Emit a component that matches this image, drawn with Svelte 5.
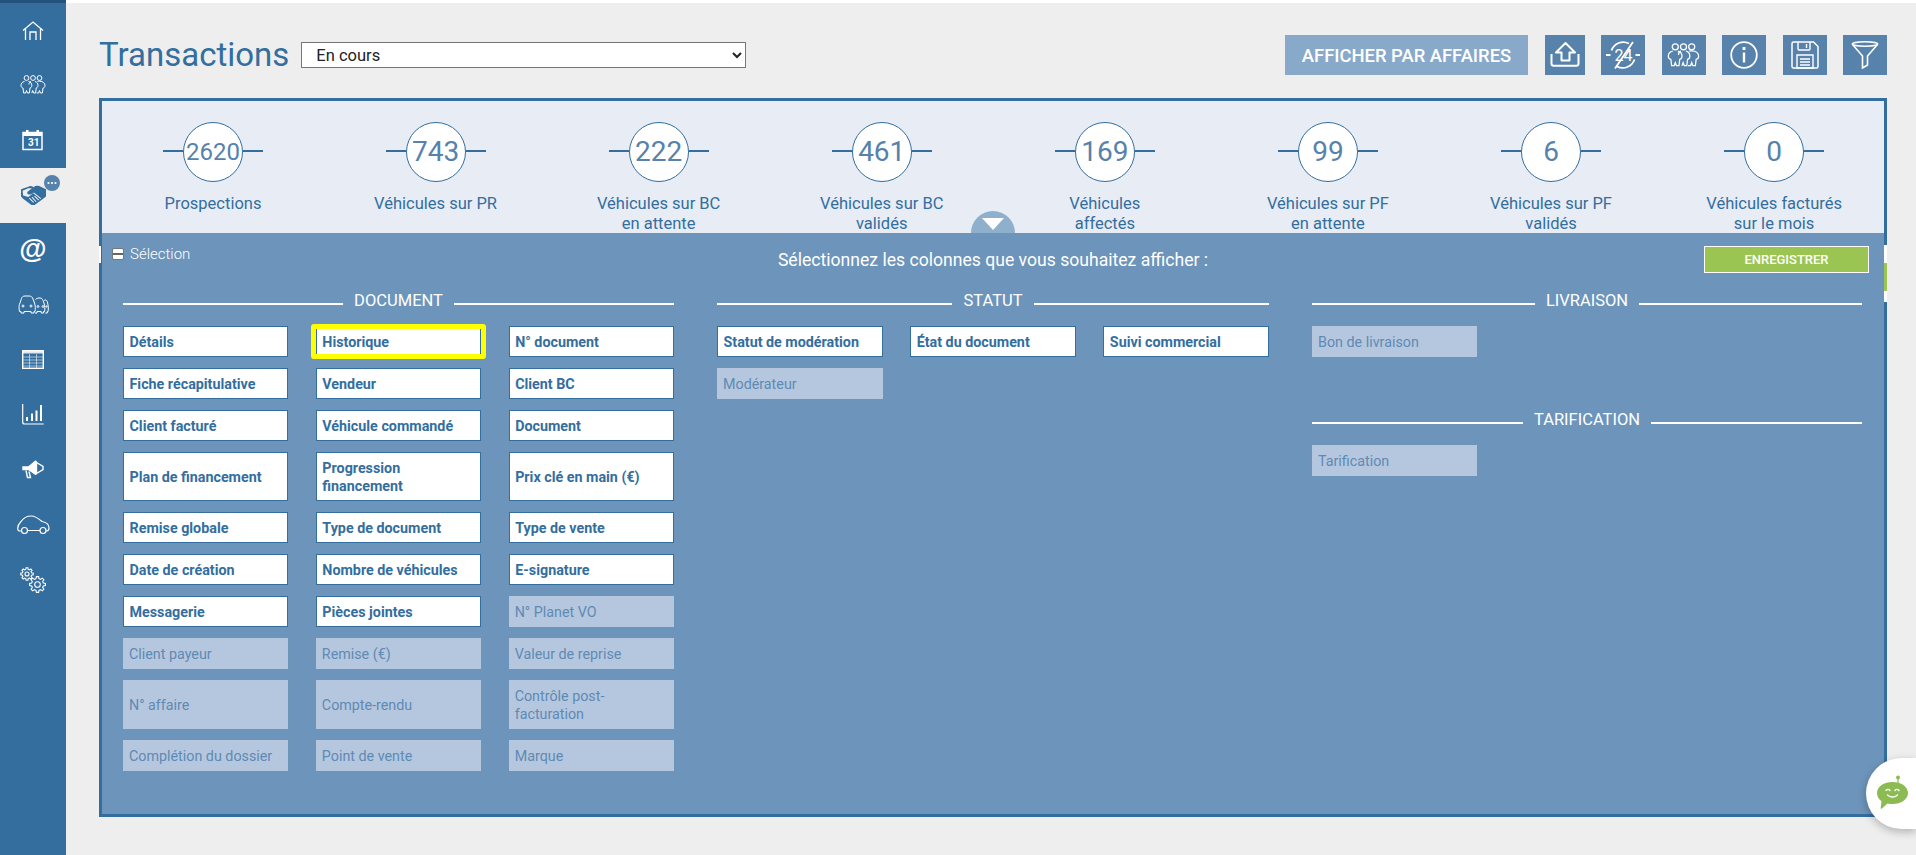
<script>
  const stats = [
    ['2620', 'Prospections'],
    ['743', 'Véhicules sur PR'],
    ['222', 'Véhicules sur BC\nen attente'],
    ['461', 'Véhicules sur BC\nvalidés'],
    ['169', 'Véhicules\naffectés'],
    ['99', 'Véhicules sur PF\nen attente'],
    ['6', 'Véhicules sur PF\nvalidés'],
    ['0', 'Véhicules facturés\nsur le mois']
  ];
  const doc = [
    ['Détails', 1], ['Historique', 1, 0, 1], ['N° document', 1],
    ['Fiche récapitulative', 1], ['Vendeur', 1], ['Client BC', 1],
    ['Client facturé', 1], ['Véhicule commandé', 1], ['Document', 1],
    ['Plan de financement', 1, 1], ['Progression financement', 1, 1], ['Prix clé en main (€)', 1, 1],
    ['Remise globale', 1], ['Type de document', 1], ['Type de vente', 1],
    ['Date de création', 1], ['Nombre de véhicules', 1], ['E-signature', 1],
    ['Messagerie', 1], ['Pièces jointes', 1], ['N° Planet VO', 0],
    ['Client payeur', 0], ['Remise (€)', 0], ['Valeur de reprise', 0],
    ['N° affaire', 0, 1], ['Compte-rendu', 0, 1], ['Contrôle post-facturation', 0, 1],
    ['Complétion du dossier', 0], ['Point de vente', 0], ['Marque', 0]
  ];
  const statut = [
    ['Statut de modération', 1], ['État du document', 1], ['Suivi commercial', 1], ['Modérateur', 0]
  ];
  function gear(cx, cy, ro, ri, n) {
    let d = '';
    const step = (Math.PI * 2) / n;
    for (let i = 0; i < n; i++) {
      const a = i * step;
      const pts = [[a - step * 0.32, ri], [a - step * 0.18, ro], [a + step * 0.18, ro], [a + step * 0.32, ri]];
      for (const [t, r] of pts) {
        d += (d ? 'L' : 'M') + (cx + r * Math.cos(t)).toFixed(2) + ' ' + (cy + r * Math.sin(t)).toFixed(2);
      }
    }
    return d + 'Z';
  }
</script>

{#snippet people(w, h)}
  <svg width={w} height={h} viewBox="0 0 26 19" fill="none" stroke="#fff" stroke-width="1">
    <circle cx="6.5" cy="3" r="2.4" /><circle cx="13" cy="3" r="2.4" /><circle cx="19.5" cy="3" r="2.4" />
    <path d="M4.5 6.5C2 7 1 8.5 1 10.5c0 1.5.8 2.3 2 2.5l.6 5h2l.9-2.5.9 2.5h2l.6-5c1.4-.4 1.800-1.500 1.800-2.500 0-2-1-3.500-3.300-4" />
    <path d="M11 6.500c-1.500.5-2 1.500-2 3M15 6.500c2 .5 3 2 3 4 0 1-.4 2.100-1.800 2.500l-.6 5h-2l-.9-2.500-.9 2.500" />
    <path d="M17.500 6.500c.6-.2 1-.3 2-.3 3.500 0 5.500 2 5.500 4.300 0 1.500-.8 2.300-2 2.500l-.6 5h-2l-.9-2.500-.9 2.500h-2" />
  </svg>
{/snippet}

{#snippet box(item)}
  <div class="box" class:on={item[1]} class:tall={item[2]} class:focus={item[3]}>{item[0]}</div>
{/snippet}

<div class="page">
  <aside class="side">
    <div class="nav first">
      <svg width="22" height="20" viewBox="0 0 22 20" fill="none" stroke="#fff" stroke-width="1.3">
        <path d="M1 9.500 11 1l10 8.500M3.500 8v11M18.500 8v11M8 19v-8h6v8" />
      </svg>
    </div>
    <div class="nav">{@render people(26, 19)}</div>
    <div class="nav">
      <svg width="22" height="22" viewBox="0 0 22 22">
        <rect x="1" y="3.500" width="19" height="17" fill="none" stroke="#fff" stroke-width="1.500" />
        <rect x="1" y="3.500" width="19" height="3.500" fill="#fff" />
        <rect x="4" y="1" width="2.500" height="4" fill="#fff" />
        <rect x="14.500" y="1" width="2.500" height="4" fill="#fff" />
      </svg>
      <span class="cal">31</span>
    </div>
    <div class="nav active">
      <svg width="26" height="20" viewBox="0 0 25 19">
        <path fill="#336e9f" d="M8 1.500C10 .5 11.500 1 13 2c2-1.500 5-1.700 7-.5L25 4v7l-4 3-7 5h-3L3 13l-2-2V4Z" />
        <path fill="#eee" d="M2.500 5.500 8 3h3.500L7 6.500C6.500 8 8 9.500 10 9l3-1.500L8 11.500l-5-1.500Z" />
        <path fill="none" stroke="#eee" stroke-width="1" d="M13 7.500 20 13M9 12.500l4 4M11.500 11.500l4 4.500M14 10.500l4 4" />
      </svg>
      <span class="dots">
        <svg width="16" height="16" viewBox="0 0 16 16" fill="#fff"><circle cx="4.500" cy="8" r="1.100" /><circle cx="8" cy="8" r="1.100" /><circle cx="11.500" cy="8" r="1.100" /></svg>
      </span>
    </div>
    <div class="nav at">@</div>
    <div class="nav">
      <svg width="31" height="19" viewBox="0 0 31 19" fill="none" stroke="#fff" stroke-width="1">
        <path d="M3 16.500H1.500C.8 13 .8 10 2 8l1.500-4.500C4 2 5 1 7 1h4c2 0 3.500 1 4 3l1.500 4c1 3 1 6 .5 8.500h-1V18h-3v-1.500H6V18H3Z" />
        <circle cx="5" cy="11" r="1" /><circle cx="13" cy="11" r="1" />
        <path d="M17.500 4.500C18.500 3.500 19.500 3 21 3h1c1.500 0 2.500 1 3 2.500l1.300 3.500c.7 2.500.7 5 .3 7.500h-1V18h-2.400v-1.500H19V18h-2" />
        <path d="M26 5.500c.7-.5 1-.5 1.500-.5 1 0 1.500.8 1.800 1.800l.7 3c.5 2 .4 4.500.1 6.700h-.8V18h-2" />
        <circle cx="20" cy="11.500" r=".9" /><circle cx="25" cy="11.500" r=".9" /><circle cx="28.500" cy="11.500" r=".7" />
      </svg>
    </div>
    <div class="nav">
      <svg width="22" height="19" viewBox="0 0 22 19" fill="none" stroke="#fff">
        <rect x=".7" y=".7" width="20.600" height="17.600" stroke-width="1.400" />
        <path fill="#fff" fill-opacity=".85" stroke="none" d="M.5.500h21v3H.5z" />
        <path stroke-opacity=".55" d="M1 7h20M1 10h20M1 13h20M1 16h20M7.500 4v14M14.500 4v14" />
      </svg>
    </div>
    <div class="nav">
      <svg width="22" height="21" viewBox="0 0 22 21" fill="none" stroke="#fff">
        <path d="M.7 0v18c0 1.300.8 2 2 2h19" stroke-width="1.200" />
        <path stroke-width="2" d="M5 13v4M10 9.500V17M14.500 6.500V17M19 1v16" />
      </svg>
    </div>
    <div class="nav">
      <svg width="22" height="19" viewBox="0 0 22 19" fill="none" stroke="#fff" stroke-width="1.400">
        <path d="M1 7h5.500L13 1.500c1-.5 1.500 0 1.500 1v10.500c0 1-.5 1.500-1.500 1l-6.500-4.500H1Z" fill="#fff" />
        <path d="M14.500 2.500l6.500 4v3l-6.500 4M4 10.500l1.500 7h3l-1.500-6" />
      </svg>
    </div>
    <div class="nav">
      <svg width="33" height="20" viewBox="0 0 33 20" fill="none" stroke="#fff" stroke-width="1.200">
        <path d="M5 16H3C1.500 16 .7 15 .7 13.500c0-3 1.300-5 3.300-7C6.500 3 9.500 1 14 1c4 0 7 2 11 5.500 3 .5 7 2 7 6.500 0 2-1 3-2.500 3H29M10.500 15.500h12.500" />
        <circle cx="7.500" cy="15.500" r="3" /><circle cx="26" cy="15.500" r="3" />
      </svg>
    </div>
    <div class="nav">
      <svg width="26" height="26" viewBox="0 0 26 26" fill="none" stroke="#fff" stroke-width="1.100">
        <path d={gear(7, 7, 6.300, 4.700, 8)} /><circle cx="7" cy="7" r="2" />
        <path d={gear(17.500, 17.500, 8, 6, 8)} /><circle cx="17.500" cy="17.500" r="2.800" />
      </svg>
    </div>
  </aside>

  <main class="main">
    <header class="head">
      <h1>Transactions</h1>
      <select class="sel"><option>En cours</option></select>
      <div class="tools">
        <button class="show">AFFICHER PAR AFFAIRES</button>
        <button class="tool w40">
          <svg width="30" height="28" viewBox="0 0 30 28" fill="none" stroke="#fff" stroke-width="2">
            <path d="M15.500 2 6 11.500h5.500V19.500h8V11.500H25Z" stroke-linejoin="round" /><path d="M1.500 13v9.500c0 1.300.8 2.200 2.200 2.200h22.600c1.400 0 2.200-.9 2.200-2.200V13" />
          </svg>
        </button>
        <button class="tool">
          <svg width="36" height="28" viewBox="0 0 36 28" fill="none" stroke="#fff" stroke-width="1.800">
            <path d="M6.500 9.500A12.500 12.500 0 0 1 24 2.500M29.500 18.500A12.500 12.500 0 0 1 12 25.500M1 14h4.500M30.500 14H35M10 27.500 28 1" />
            <text x="9.500" y="19.500" font-size="16" font-weight="400" font-family="Roboto" fill="#fff" stroke="none">24</text>
          </svg>
        </button>
        <button class="tool">{@render people(33, 24)}</button>
        <button class="tool">
          <svg width="28" height="28" viewBox="0 0 28 28" fill="none" stroke="#fff" stroke-width="1.800">
            <circle cx="14" cy="14" r="12.800" /><path d="M14 11.500v10" stroke-width="2.400" /><path d="M14 6v3" stroke-width="2.800" />
          </svg>
        </button>
        <button class="tool">
          <svg width="28" height="28" viewBox="0 0 28 28" fill="none" stroke="#fff" stroke-width="1.500">
            <path d="M2.500 1h20L27 5.500v20c0 1-.5 1.500-1.500 1.500h-23C1.500 27 1 26.500 1 25.500v-23C1 1.500 1.500 1 2.500 1Z" />
            <path d="M7 1v7c0 .6.400 1 1 1h10c.6 0 1-.4 1-1V1M15.500 3v4M6 14h16v13H6ZM9 18h10M9 21h10M9 24h10" stroke-width="1.400" />
          </svg>
        </button>
        <button class="tool">
          <svg width="28" height="28" viewBox="0 0 28 28" fill="none" stroke="#fff" stroke-width="1.600">
            <ellipse cx="14" cy="3" rx="12.800" ry="2.200" /><path d="M1.500 3.500 11.500 15v12l5-3V15L26.500 3.500" />
          </svg>
        </button>
      </div>
    </header>

    <section class="panel">
      <div class="stats">
        {#each stats as s}
          <div class="stat">
            <div class="dial"><i></i><b>{s[0]}</b><i></i></div>
            <p>{s[1]}</p>
          </div>
        {/each}
        <div class="toggle"></div>
      </div>

      <div class="choose">
        <span class="mark-l"></span><span class="mark-r"></span>
        <div class="bar">
          <div class="sel-label"><span class="minus"></span>Sélection</div>
          <div class="bar-title">Sélectionnez les colonnes que vous souhaitez afficher :</div>
          <div class="bar-end"><button class="save">ENREGISTRER</button></div>
        </div>
        <div class="groups">
          <div>
            <h2><span>DOCUMENT</span></h2>
            <div class="grid">{#each doc as d}{@render box(d)}{/each}</div>
          </div>
          <div>
            <h2><span>STATUT</span></h2>
            <div class="grid">{#each statut as d}{@render box(d)}{/each}</div>
          </div>
          <div>
            <h2><span>LIVRAISON</span></h2>
            <div class="grid">{@render box(['Bon de livraison', 0])}</div>
            <h2 class="second"><span>TARIFICATION</span></h2>
            <div class="grid">{@render box(['Tarification', 0])}</div>
          </div>
        </div>
      </div>
    </section>
  </main>

  <div class="chat">
    <svg width="33" height="36" viewBox="0 0 33 36">
      <circle cx="22" cy="2.500" r="2" fill="#8bbb52" />
      <path d="M22 3v5" stroke="#8bbb52" stroke-width="1.200" />
      <path fill="#8bbb52" d="M16.500 7C25 7 32 11.500 32 18s-7 11-15.500 11c-2 0-3.500-.2-5-.6L6 33.500c-1 .6-1.500.2-1.300-.8l.8-6.500C2.500 24 1 21 1 18 1 11.500 8 7 16.500 7Z" />
      <path fill="none" stroke="#fff" stroke-width="1.400" stroke-linecap="round" d="M10 15.500c1-1.500 3-1.500 4 0M19 15.500c1-1.500 3-1.500 4 0M11.500 20c3 2.500 7 2.500 10 0" />
    </svg>
  </div>
</div>

<style>
  :global(body) {
    margin: 0;
    background: #eee;
    font-family: Roboto, "Liberation Sans", sans-serif;
    overflow: hidden;
  }
  .page {
    display: flex;
    position: relative;
    height: 855px;
    border-top: 3px solid #fff;
    box-sizing: border-box;
    background: #eee;
  }
  .side {
    width: 66px;
    flex: none;
    margin-top: -3px;
    box-sizing: border-box;
    background: #336e9f;
    border-top: 3px solid #23527c;
    height: 855px;
  }
  .nav {
    height: 55px;
    box-sizing: border-box;
    padding-bottom: 2px;
    display: flex;
    align-items: center;
    justify-content: center;
    position: relative;
    color: #fff;
  }
  .first { padding-bottom: 0; }
  .active { background: #eee; }
  .at {
    font: 700 28px "Liberation Sans", sans-serif;
    padding-bottom: 4px;
  }
  .cal {
    position: absolute;
    left: 28px;
    top: 24px;
    font: 700 10px Roboto, sans-serif;
  }
  .dots {
    position: absolute;
    left: 44px;
    top: 7px;
    width: 16px;
    height: 16px;
    border-radius: 50%;
    background: #5682ab;
    display: flex;
  }
  .main {
    flex: 1;
    padding: 0 29px 0 33px;
    min-width: 0;
  }
  .head {
    display: flex;
    align-items: center;
    height: 95px;
    padding-top: 9px;
    box-sizing: border-box;
  }
  h1 {
    margin: 0 12px 0 0;
    font-size: 33px;
    font-weight: 400;
    color: #336e9f;
    line-height: 40px;
  }
  .sel {
    width: 445px;
    height: 26px;
    padding-left: 10px;
    background: #fff;
    border: 1px solid #767676;
    font: 16.500px Roboto, sans-serif;
    color: #222;
  }
  .tools {
    margin-left: auto;
    display: flex;
    gap: 16.500px;
    align-items: center;
  }
  button {
    border: 0;
    padding: 0;
    font-family: inherit;
  }
  .show {
    width: 243px;
    height: 40px;
    background: #89a9cb;
    color: #fff;
    font-size: 18.400px;
    font-weight: 500;
  }
  .tool {
    width: 44px;
    height: 40px;
    background: #5682ab;
    display: flex;
    align-items: center;
    justify-content: center;
  }
  .w40 { width: 40px; }
  .panel {
    border: 3px solid #336e9f;
    position: relative;
    background: #6d94ba;
  }
  .stats {
    position: relative;
    display: grid;
    grid-template-columns: 222px repeat(7, 223.100px);
    height: 132px;
    box-sizing: border-box;
    padding: 21px 0 0;
    background: #e7ecf5;
    overflow: hidden;
  }
  .stat { text-align: center; }
  .dial {
    display: flex;
    align-items: center;
    justify-content: center;
  }
  .dial i {
    width: 20px;
    height: 1.500px;
    background: #336e9f;
    margin-top: -2px;
  }
  .dial b {
    width: 60px;
    height: 60px;
    box-sizing: border-box;
    border: 1px solid #336e9f;
    border-radius: 50%;
    background: #fff;
    color: #5682ab;
    font-weight: 400;
    font-size: 28px;
    line-height: 58px;
  }
  .stat:first-child .dial b { font-size: 24px; }
  .stat p {
    margin: 12px 0 0;
    font-size: 16.500px;
    line-height: 20px;
    color: #336e9f;
    white-space: pre-line;
  }
  .toggle {
    position: absolute;
    left: 869px;
    top: 110px;
    width: 44px;
    height: 44px;
    border-radius: 50%;
    background: #8fb0cd;
  }
  .toggle::after {
    content: "";
    position: absolute;
    left: 11px;
    top: 7px;
    border-left: 11px solid transparent;
    border-right: 11px solid transparent;
    border-top: 12px solid #fff;
  }
  .choose {
    position: relative;
    height: 581px;
    box-sizing: border-box;
    padding: 13px 0 0;
    background: #6d94ba;
  }
  .mark-l {
    position: absolute;
    left: -3px;
    top: 13px;
    width: 2px;
    height: 17px;
    background: #fff;
  }
  .mark-r {
    position: absolute;
    right: -3px;
    top: 12px;
    width: 3px;
    height: 57px;
    background: linear-gradient(#fff 18px, #9bc552 18px, #9bc552 46px, #fff 46px);
  }
  .bar {
    display: grid;
    grid-template-columns: 1fr auto 1fr;
    align-items: start;
    padding: 0 15px 0 10px;
    color: #fff;
  }
  .sel-label {
    display: flex;
    align-items: center;
    gap: 6px;
    font-size: 15px;
    font-weight: 300;
    height: 16px;
  }
  .minus {
    width: 12px;
    height: 12px;
    box-sizing: border-box;
    border: 1px solid #777;
    border-radius: 2px;
    background: linear-gradient(#fff 4px, #666 4px, #666 6px, #fff 6px);
  }
  .bar-title {
    font-size: 17.600px;
    line-height: 22px;
    margin: 3px 0 0 5px;
  }
  .bar-end { text-align: right; }
  .save {
    width: 165px;
    height: 27px;
    border: 1px solid #fff;
    background: #9bc552;
    color: #fff;
    font-size: 13px;
    font-weight: 500;
  }
  .groups {
    display: grid;
    grid-template-columns: 551px 552px 1fr;
    column-gap: 43px;
    padding: 18px 22px 0 21px;
  }
  h2 {
    display: flex;
    align-items: center;
    gap: 11px;
    margin: 0 0 15px;
    color: #fff;
    font-size: 16.500px;
    font-weight: 400;
    line-height: 20px;
  }
  h2::before, h2::after {
    content: "";
    flex: 1;
    height: 1.500px;
    margin-top: 6px;
    background: #fff;
  }
  .second { margin-top: 53px; }
  .grid {
    display: grid;
    grid-template-columns: repeat(3, 1fr);
    column-gap: 27.500px;
    row-gap: 11px;
  }
  .box {
    position: relative;
    display: flex;
    align-items: center;
    min-height: 31px;
    box-sizing: border-box;
    padding: 1px 6px 0;
    line-height: 18px;
    font-size: 14.300px;
    color: #5f8ab3;
    background: #b5c7df;
  }
  .tall { min-height: 49px; }
  .on {
    border: 1px solid #336e9f;
    padding: 1.500px 5.500px 0;
    background: #fff;
    color: #336e9f;
    font-weight: 700;
  }
  .focus::after {
    content: "";
    position: absolute;
    inset: -3px -6px;
    border: 5px solid #ff0;
    border-radius: 3px;
  }
  .chat {
    position: absolute;
    right: 0;
    top: 755px;
    width: 50px;
    height: 71px;
    background: #fff;
    border-radius: 36px 0 0 36px;
    box-shadow: 0 3px 8px rgba(0, 0, 0, 0.25);
    box-sizing: border-box;
    padding: 17px 0 0 10px;
  }
  .chat svg { display: block; }
</style>
